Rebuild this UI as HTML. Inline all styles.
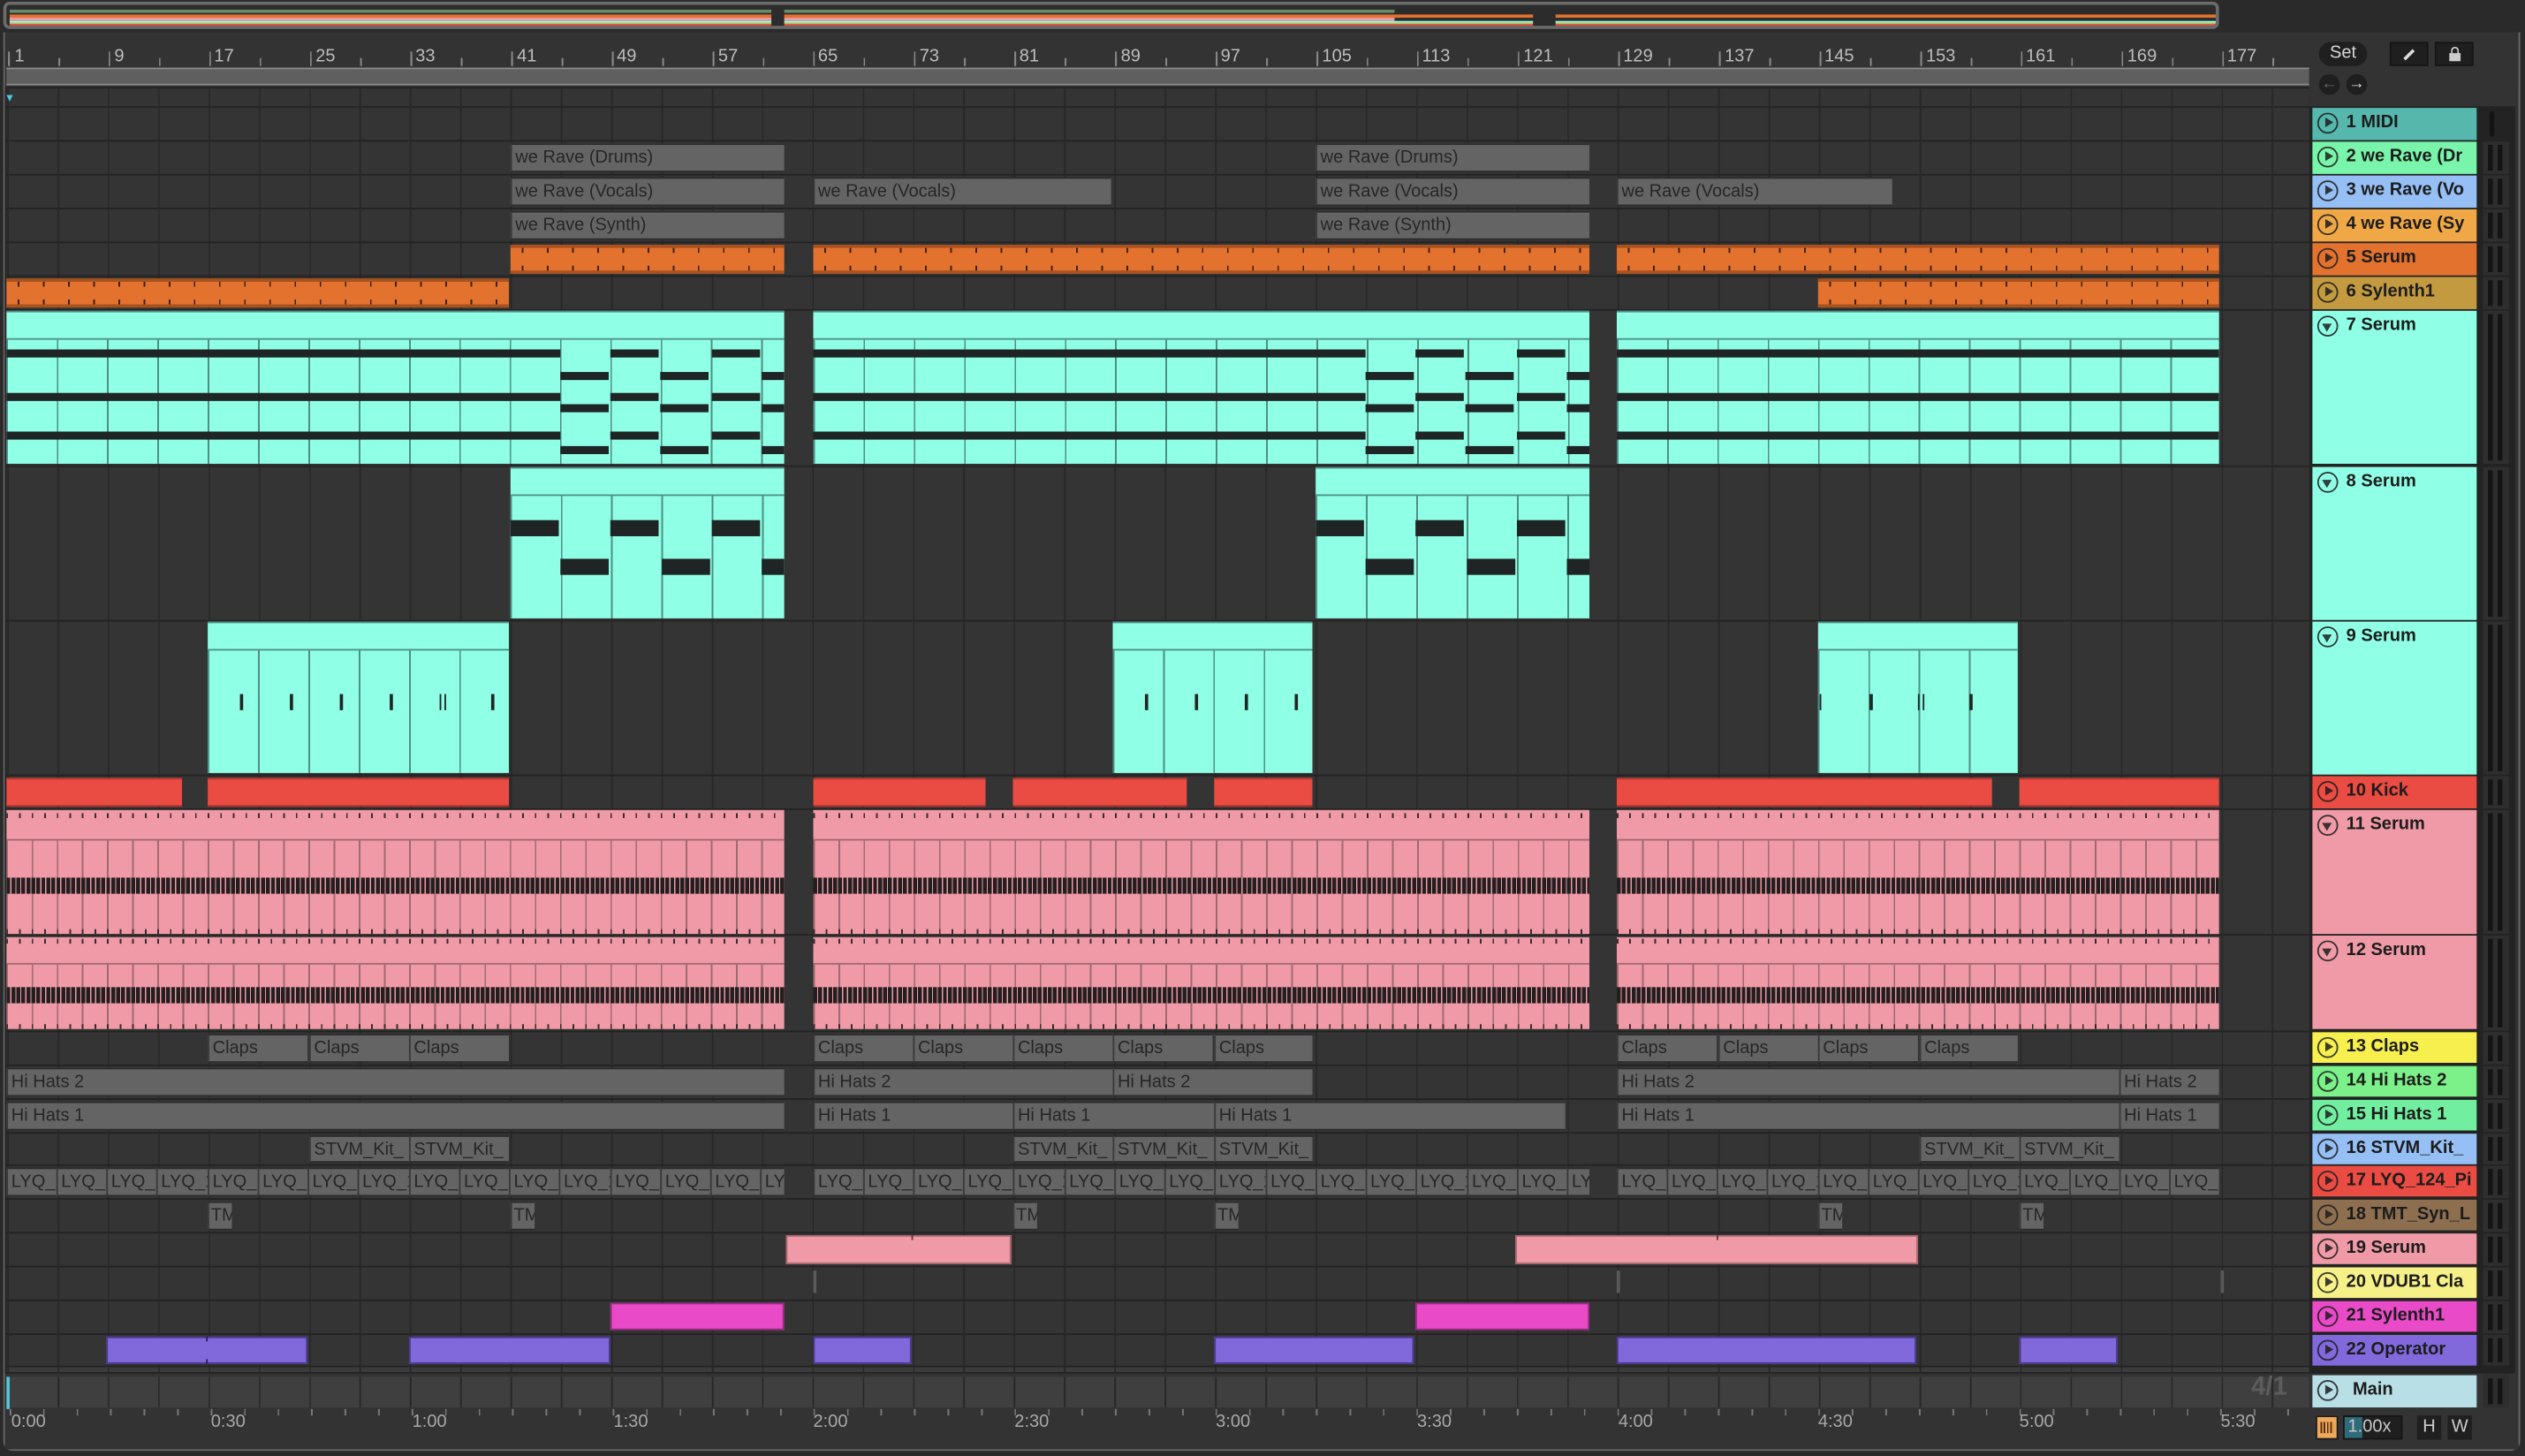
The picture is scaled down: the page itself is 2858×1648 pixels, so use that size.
<!DOCTYPE html>
<html><head><meta charset="utf-8"><style>
*{margin:0;padding:0;box-sizing:border-box}
body{width:2858px;height:1648px;background:#2a2a2a;overflow:hidden;font-family:"Liberation Sans",sans-serif}
#s{position:absolute;left:0;top:0;width:1568px;height:904px;transform:scale(1.8227);transform-origin:0 0;background:#2a2a2a}
.a{position:absolute}
.row{position:absolute;left:4px;width:1430px;background-color:#343434;background-image:repeating-linear-gradient(90deg,#282828 0 1px,transparent 1px 31.25px);background-position:0.5px 0}
.g{position:absolute;background:#646464;color:#262626;font-size:11px;line-height:16px;padding-left:2px;overflow:hidden;white-space:nowrap;border-top:1px solid #2c2c2c;border-bottom:1px solid #2c2c2c;border-left:1px solid #3a3a3a}
.o{position:absolute;background:#e3722f;border-top:2px solid #a8521f;border-bottom:2px solid #a8521f}
.o::before,.o::after{content:"";position:absolute;left:0;right:0;height:3px;background:repeating-linear-gradient(90deg,transparent 0 7px,#3a2010 7px 8px,transparent 8px 15.625px)}
.o::before{top:0}.o::after{bottom:0}
.r{position:absolute;background:#ea4b42;border-top:1px solid #b13a33;border-bottom:1px solid #a9332c}
.c{position:absolute;background:#8fffe6;overflow:hidden;border-top:1px solid #4f8f85}
.c .v{position:absolute;top:17px;bottom:0;left:0;right:0;background:repeating-linear-gradient(90deg,#4f8f85 0 1px,transparent 1px 31.25px)}
.c .h{position:absolute;left:0;right:0;top:16px;height:1px;background:#4f8f85}
.n{position:absolute;height:5px;background:#1f2524}
.p{position:absolute;background:#ef9aa6;overflow:hidden}
.p .v{position:absolute;left:0;right:0;background:repeating-linear-gradient(90deg,#a06a72 0 1px,transparent 1px 15.625px)}
.p .t{position:absolute;left:0;right:0;height:3px;background:repeating-linear-gradient(90deg,#3b2a2c 0 1px,transparent 1px 7.8125px)}
.p .d{position:absolute;left:0;right:0;height:10px;background:repeating-linear-gradient(90deg,#231f20 0 2.4px,#ef9aa6 2.4px 3.1px)}
.hd{position:absolute;left:1436px;width:102px;font-size:11px;font-weight:bold;color:#1c1c1c;line-height:19px;padding-left:21px;white-space:nowrap;overflow:hidden}
.hd::before{content:"";position:absolute;left:3px;top:3px;width:11px;height:11px;border:1.3px solid #1c1c1c;border-radius:50%;opacity:.85}
.hd::after{content:"";position:absolute;left:7.5px;top:6px;border-left:5px solid #1c1c1c;border-top:3px solid transparent;border-bottom:3px solid transparent;opacity:.85}
.hd.dn::after{left:5.5px;top:8px;border-top:5px solid #1c1c1c;border-left:3px solid transparent;border-right:3px solid transparent;border-bottom:0}
.mx{position:absolute;left:1542px;width:16px;background:#2e2e2e}
.mx::before,.mx::after{content:"";position:absolute;top:2px;bottom:2px;width:3px;background:#141414}
.mx::before{left:3px}.mx::after{left:9px}
.rl{position:absolute;top:29px;font-size:11px;color:#bdbdbd}
.tl{position:absolute;top:877px;font-size:11px;color:#a8a8a8}
</style></head><body><div id="s">
<div class="a" style="left:2px;top:20px;width:1563px;height:881px;border:2px solid #6b6b6b;border-top:none;border-radius:0 0 6px 6px"></div>
<div class="a" style="left:3px;top:20px;width:1561px;height:880px;background:#333"></div>
<div class="a" style="left:3px;top:54px;width:1559px;height:799px;background:#232323"></div>
<div class="a" style="left:1434px;top:54px;width:128px;height:12px;background:#333"></div>
<!-- overview -->
<div class="a" style="left:2px;top:1px;width:1376px;height:17px;border:2px solid #6b6b6b;border-radius:4px;background:#2c2c2c;overflow:hidden">
 <div class="a" style="left:2px;top:3px;width:860px;height:2px;background:#6c8a6a"></div>
 <div class="a" style="left:2px;top:6px;width:1370px;height:2px;background:#e3722f"></div>
 <div class="a" style="left:2px;top:8px;width:860px;height:2px;background:#ef9aa6"></div>
 <div class="a" style="left:2px;top:10px;width:1370px;height:1px;background:#8fffe6"></div>
 <div class="a" style="left:2px;top:11px;width:1370px;height:1px;background:#b8c860"></div>
 <div class="a" style="left:2px;top:12px;width:1370px;height:1px;background:#ea4b42"></div>
 <div class="a" style="left:475px;top:2px;width:8px;height:12px;background:#2c2c2c"></div>
 <div class="a" style="left:948px;top:2px;width:14px;height:12px;background:#2c2c2c"></div>
</div>
<!-- ruler -->
<div class="a" style="left:4px;top:42px;width:1430px;height:11px;background:#5f5f5f;border-top:1px solid #8a8a8a;border-bottom:1px solid #8a8a8a"></div>
<div class="a" style="left:4px;top:36px;width:1430px;height:5px;background:repeating-linear-gradient(90deg,#888 0 1px,transparent 1px 31.25px);background-position:1px 0"></div>
<div class="a" style="left:4px;top:32px;width:1430px;height:9px;background:repeating-linear-gradient(90deg,#888 0 1px,transparent 1px 62.5px);background-position:1px 0"></div>
<span class="rl" style="left:9px">1</span><span class="rl" style="left:71px">9</span><span class="rl" style="left:133px">17</span><span class="rl" style="left:196px">25</span><span class="rl" style="left:258px">33</span><span class="rl" style="left:321px">41</span><span class="rl" style="left:383px">49</span><span class="rl" style="left:446px">57</span><span class="rl" style="left:508px">65</span><span class="rl" style="left:571px">73</span><span class="rl" style="left:633px">81</span><span class="rl" style="left:696px">89</span><span class="rl" style="left:758px">97</span><span class="rl" style="left:821px">105</span><span class="rl" style="left:883px">113</span><span class="rl" style="left:946px">121</span><span class="rl" style="left:1008px">129</span><span class="rl" style="left:1071px">137</span><span class="rl" style="left:1133px">145</span><span class="rl" style="left:1196px">153</span><span class="rl" style="left:1258px">161</span><span class="rl" style="left:1321px">169</span><span class="rl" style="left:1383px">177</span>
<!-- rows -->
<div class="row" style="top:55px;height:11px"></div>
<div class="a" style="left:4px;top:59px;border-top:4px solid #4fc6dc;border-left:2px solid transparent;border-right:2px solid transparent"></div>
<div class="row" style="top:67px;height:20px"></div>
<div class="row" style="top:88px;height:20px"></div>
<div class="row" style="top:109px;height:20px"></div>
<div class="row" style="top:130px;height:20px"></div>
<div class="row" style="top:151px;height:20px"></div>
<div class="row" style="top:172px;height:20px"></div>
<div class="row" style="top:193px;height:96px"></div>
<div class="row" style="top:290px;height:95px"></div>
<div class="row" style="top:386px;height:95px"></div>
<div class="row" style="top:482px;height:20px"></div>
<div class="row" style="top:503px;height:77px"></div>
<div class="row" style="top:581px;height:59px"></div>
<div class="row" style="top:641px;height:20px"></div>
<div class="row" style="top:662px;height:20px"></div>
<div class="row" style="top:683px;height:20px"></div>
<div class="row" style="top:704px;height:19px"></div>
<div class="row" style="top:724px;height:20px"></div>
<div class="row" style="top:745px;height:20px"></div>
<div class="row" style="top:766px;height:20px"></div>
<div class="row" style="top:787px;height:20px"></div>
<div class="row" style="top:808px;height:20px"></div>
<div class="row" style="top:829px;height:19px"></div>
<div class="row" style="top:849px;height:3px;background-color:#3b3b3b"></div>
<div class="row" style="top:855px;height:19px;background-color:#3f3f3f"></div>
<div class="a" style="left:4px;top:855px;width:2px;height:20px;background:#4fc6dc"></div>
<!-- time ruler -->
<div class="a" style="left:4px;top:875px;width:1430px;height:4px;background:repeating-linear-gradient(90deg,#777 0 1px,transparent 1px 20.8px);background-position:2px 0"></div>
<span class="tl" style="left:7px">0:00</span><span class="tl" style="left:131px">0:30</span><span class="tl" style="left:256px">1:00</span><span class="tl" style="left:381px">1:30</span><span class="tl" style="left:505px">2:00</span><span class="tl" style="left:630px">2:30</span><span class="tl" style="left:755px">3:00</span><span class="tl" style="left:880px">3:30</span><span class="tl" style="left:1005px">4:00</span><span class="tl" style="left:1129px">4:30</span><span class="tl" style="left:1254px">5:00</span><span class="tl" style="left:1379px">5:30</span>
<div class="a" style="left:1398px;top:853px;font-size:16px;font-weight:bold;color:#5c5c5c">4/1</div>

<div class="g" style="left:317px;top:89px;width:170px;height:18px">we Rave (Drums)</div>
<div class="g" style="left:817px;top:89px;width:170px;height:18px">we Rave (Drums)</div>
<div class="g" style="left:317px;top:110px;width:170px;height:18px">we Rave (Vocals)</div>
<div class="g" style="left:505px;top:110px;width:185px;height:18px">we Rave (Vocals)</div>
<div class="g" style="left:817px;top:110px;width:170px;height:18px">we Rave (Vocals)</div>
<div class="g" style="left:1004px;top:110px;width:171px;height:18px">we Rave (Vocals)</div>
<div class="g" style="left:317px;top:131px;width:170px;height:18px">we Rave (Synth)</div>
<div class="g" style="left:817px;top:131px;width:170px;height:18px">we Rave (Synth)</div>
<div class="o" style="left:317px;top:152px;width:170px;height:18px"></div>
<div class="o" style="left:505px;top:152px;width:482px;height:18px"></div>
<div class="o" style="left:1004px;top:152px;width:374px;height:18px"></div>
<div class="o" style="left:4px;top:173px;width:312px;height:18px"></div>
<div class="o" style="left:1129px;top:173px;width:249px;height:18px"></div>

<div class="c" style="left:4px;top:193px;width:483px;height:95px"><div class="h"></div><div class="v"></div>
 <div class="n" style="left:0;width:344px;top:23px"></div><div class="n" style="left:0;width:344px;top:50px"></div><div class="n" style="left:0;width:344px;top:74px"></div>
 <div class="n" style="left:344px;width:30px;top:37px"></div><div class="n" style="left:344px;width:30px;top:57px"></div><div class="n" style="left:344px;width:30px;top:83px"></div>
 <div class="n" style="left:375px;width:30px;top:23px"></div><div class="n" style="left:375px;width:30px;top:50px"></div><div class="n" style="left:375px;width:30px;top:74px"></div>
 <div class="n" style="left:406px;width:30px;top:37px"></div><div class="n" style="left:406px;width:30px;top:57px"></div><div class="n" style="left:406px;width:30px;top:83px"></div>
 <div class="n" style="left:438px;width:30px;top:23px"></div><div class="n" style="left:438px;width:30px;top:50px"></div><div class="n" style="left:438px;width:30px;top:74px"></div>
 <div class="n" style="left:469px;width:14px;top:37px"></div><div class="n" style="left:469px;width:14px;top:57px"></div><div class="n" style="left:469px;width:14px;top:83px"></div>
</div>
<div class="c" style="left:505px;top:193px;width:482px;height:95px"><div class="h"></div><div class="v"></div>
 <div class="n" style="left:0;width:343px;top:23px"></div><div class="n" style="left:0;width:343px;top:50px"></div><div class="n" style="left:0;width:343px;top:74px"></div>
 <div class="n" style="left:343px;width:30px;top:37px"></div><div class="n" style="left:343px;width:30px;top:57px"></div><div class="n" style="left:343px;width:30px;top:83px"></div>
 <div class="n" style="left:374px;width:30px;top:23px"></div><div class="n" style="left:374px;width:30px;top:50px"></div><div class="n" style="left:374px;width:30px;top:74px"></div>
 <div class="n" style="left:405px;width:30px;top:37px"></div><div class="n" style="left:405px;width:30px;top:57px"></div><div class="n" style="left:405px;width:30px;top:83px"></div>
 <div class="n" style="left:437px;width:30px;top:23px"></div><div class="n" style="left:437px;width:30px;top:50px"></div><div class="n" style="left:437px;width:30px;top:74px"></div>
 <div class="n" style="left:468px;width:14px;top:37px"></div><div class="n" style="left:468px;width:14px;top:57px"></div><div class="n" style="left:468px;width:14px;top:83px"></div>
</div>
<div class="c" style="left:1004px;top:193px;width:374px;height:95px"><div class="h"></div><div class="v"></div>
 <div class="n" style="left:0;right:0;top:23px"></div><div class="n" style="left:0;right:0;top:50px"></div><div class="n" style="left:0;right:0;top:74px"></div>
</div>
<div class="c" style="left:317px;top:290px;width:170px;height:94px"><div class="h"></div><div class="v"></div>
 <div class="n" style="left:0;width:30px;top:32px;height:10px"></div><div class="n" style="left:31px;width:30px;top:56px;height:10px"></div><div class="n" style="left:62px;width:30px;top:32px;height:10px"></div><div class="n" style="left:94px;width:30px;top:56px;height:10px"></div><div class="n" style="left:125px;width:30px;top:32px;height:10px"></div><div class="n" style="left:156px;width:14px;top:56px;height:10px"></div>
</div>
<div class="c" style="left:817px;top:290px;width:170px;height:94px"><div class="h"></div><div class="v"></div>
 <div class="n" style="left:0;width:30px;top:32px;height:10px"></div><div class="n" style="left:31px;width:30px;top:56px;height:10px"></div><div class="n" style="left:62px;width:30px;top:32px;height:10px"></div><div class="n" style="left:94px;width:30px;top:56px;height:10px"></div><div class="n" style="left:125px;width:30px;top:32px;height:10px"></div><div class="n" style="left:156px;width:14px;top:56px;height:10px"></div>
</div>
<div class="c" style="left:129px;top:386px;width:187px;height:94px"><div class="h"></div><div class="v"></div>
 <div class="n" style="left:20px;width:2px;height:10px;top:44px"></div><div class="n" style="left:51px;width:2px;height:10px;top:44px"></div><div class="n" style="left:82px;width:2px;height:10px;top:44px"></div><div class="n" style="left:113px;width:2px;height:10px;top:44px"></div><div class="n" style="left:144px;width:1px;height:10px;top:44px"></div><div class="n" style="left:147px;width:1px;height:10px;top:44px"></div><div class="n" style="left:176px;width:2px;height:10px;top:44px"></div>
</div>
<div class="c" style="left:691px;top:386px;width:124px;height:94px"><div class="h"></div><div class="v"></div>
 <div class="n" style="left:20px;width:2px;height:10px;top:44px"></div><div class="n" style="left:51px;width:2px;height:10px;top:44px"></div><div class="n" style="left:82px;width:2px;height:10px;top:44px"></div><div class="n" style="left:113px;width:2px;height:10px;top:44px"></div>
</div>
<div class="c" style="left:1129px;top:386px;width:124px;height:94px"><div class="h"></div><div class="v"></div>
 <div class="n" style="left:1px;width:1px;height:10px;top:44px"></div><div class="n" style="left:32px;width:2px;height:10px;top:44px"></div><div class="n" style="left:62px;width:1px;height:10px;top:44px"></div><div class="n" style="left:65px;width:1px;height:10px;top:44px"></div><div class="n" style="left:94px;width:2px;height:10px;top:44px"></div>
</div>
<div class="r" style="left:4px;top:483px;width:109px;height:18px"></div>
<div class="r" style="left:129px;top:483px;width:187px;height:18px"></div>
<div class="r" style="left:505px;top:483px;width:107px;height:18px"></div>
<div class="r" style="left:629px;top:483px;width:108px;height:18px"></div>
<div class="r" style="left:754px;top:483px;width:61px;height:18px"></div>
<div class="r" style="left:1004px;top:483px;width:233px;height:18px"></div>
<div class="r" style="left:1254px;top:483px;width:124px;height:18px"></div>

<div class="p" style="left:4px;top:503px;width:483px;height:77px"><div class="t" style="top:2px"></div><div class="a" style="left:0;right:0;top:18px;height:1px;background:#a06a72"></div><div class="v" style="top:19px;bottom:0"></div><div class="d" style="top:42px"></div><div class="t" style="bottom:0"></div></div>
<div class="p" style="left:505px;top:503px;width:482px;height:77px"><div class="t" style="top:2px"></div><div class="a" style="left:0;right:0;top:18px;height:1px;background:#a06a72"></div><div class="v" style="top:19px;bottom:0"></div><div class="d" style="top:42px"></div><div class="t" style="bottom:0"></div></div>
<div class="p" style="left:1004px;top:503px;width:374px;height:77px"><div class="t" style="top:2px"></div><div class="a" style="left:0;right:0;top:18px;height:1px;background:#a06a72"></div><div class="v" style="top:19px;bottom:0"></div><div class="d" style="top:42px"></div><div class="t" style="bottom:0"></div></div>
<div class="p" style="left:4px;top:582px;width:483px;height:57px"><div class="t" style="top:1px"></div><div class="a" style="left:0;right:0;top:16px;height:1px;background:#a06a72"></div><div class="v" style="top:17px;bottom:0"></div><div class="d" style="top:31px"></div><div class="t" style="bottom:0"></div></div>
<div class="p" style="left:505px;top:582px;width:482px;height:57px"><div class="t" style="top:1px"></div><div class="a" style="left:0;right:0;top:16px;height:1px;background:#a06a72"></div><div class="v" style="top:17px;bottom:0"></div><div class="d" style="top:31px"></div><div class="t" style="bottom:0"></div></div>
<div class="p" style="left:1004px;top:582px;width:374px;height:57px"><div class="t" style="top:1px"></div><div class="a" style="left:0;right:0;top:16px;height:1px;background:#a06a72"></div><div class="v" style="top:17px;bottom:0"></div><div class="d" style="top:31px"></div><div class="t" style="bottom:0"></div></div>

<div class="g" style="left:129px;top:642px;width:62px;height:18px">Claps</div><div class="g" style="left:192px;top:642px;width:62px;height:18px">Claps</div><div class="g" style="left:254px;top:642px;width:62px;height:18px">Claps</div>
<div class="g" style="left:505px;top:642px;width:62px;height:18px">Claps</div><div class="g" style="left:567px;top:642px;width:62px;height:18px">Claps</div><div class="g" style="left:629px;top:642px;width:62px;height:18px">Claps</div><div class="g" style="left:691px;top:642px;width:62px;height:18px">Claps</div><div class="g" style="left:754px;top:642px;width:61px;height:18px">Claps</div>
<div class="g" style="left:1004px;top:642px;width:62px;height:18px">Claps</div><div class="g" style="left:1067px;top:642px;width:62px;height:18px">Claps</div><div class="g" style="left:1129px;top:642px;width:62px;height:18px">Claps</div><div class="g" style="left:1192px;top:642px;width:61px;height:18px">Claps</div>
<div class="g" style="left:4px;top:663px;width:483px;height:18px">Hi Hats 2</div><div class="g" style="left:505px;top:663px;width:186px;height:18px">Hi Hats 2</div><div class="g" style="left:691px;top:663px;width:124px;height:18px">Hi Hats 2</div><div class="g" style="left:1004px;top:663px;width:312px;height:18px">Hi Hats 2</div><div class="g" style="left:1316px;top:663px;width:62px;height:18px">Hi Hats 2</div>
<div class="g" style="left:4px;top:684px;width:483px;height:18px">Hi Hats 1</div><div class="g" style="left:505px;top:684px;width:124px;height:18px">Hi Hats 1</div><div class="g" style="left:629px;top:684px;width:125px;height:18px">Hi Hats 1</div><div class="g" style="left:754px;top:684px;width:218px;height:18px">Hi Hats 1</div><div class="g" style="left:1004px;top:684px;width:312px;height:18px">Hi Hats 1</div><div class="g" style="left:1316px;top:684px;width:62px;height:18px">Hi Hats 1</div>
<div class="g" style="left:192px;top:705px;width:62px;height:17px">STVM_Kit_</div><div class="g" style="left:254px;top:705px;width:62px;height:17px">STVM_Kit_</div><div class="g" style="left:629px;top:705px;width:62px;height:17px">STVM_Kit_</div><div class="g" style="left:691px;top:705px;width:63px;height:17px">STVM_Kit_</div><div class="g" style="left:754px;top:705px;width:61px;height:17px">STVM_Kit_</div><div class="g" style="left:1192px;top:705px;width:62px;height:17px">STVM_Kit_</div><div class="g" style="left:1254px;top:705px;width:62px;height:17px">STVM_Kit_</div>
<div class="g" style="left:4px;top:725px;width:31px;height:18px">LYQ_1</div><div class="g" style="left:35px;top:725px;width:31px;height:18px">LYQ_1</div><div class="g" style="left:66px;top:725px;width:31px;height:18px">LYQ_1</div><div class="g" style="left:97px;top:725px;width:32px;height:18px">LYQ_1</div><div class="g" style="left:129px;top:725px;width:31px;height:18px">LYQ_1</div><div class="g" style="left:160px;top:725px;width:31px;height:18px">LYQ_1</div><div class="g" style="left:191px;top:725px;width:31px;height:18px">LYQ_1</div><div class="g" style="left:222px;top:725px;width:32px;height:18px">LYQ_1</div><div class="g" style="left:254px;top:725px;width:31px;height:18px">LYQ_1</div><div class="g" style="left:285px;top:725px;width:31px;height:18px">LYQ_1</div><div class="g" style="left:316px;top:725px;width:31px;height:18px">LYQ_1</div><div class="g" style="left:347px;top:725px;width:32px;height:18px">LYQ_1</div><div class="g" style="left:379px;top:725px;width:31px;height:18px">LYQ_1</div><div class="g" style="left:410px;top:725px;width:31px;height:18px">LYQ_1</div><div class="g" style="left:441px;top:725px;width:31px;height:18px">LYQ_1</div><div class="g" style="left:472px;top:725px;width:15px;height:18px">LYQ_1</div>
<div class="g" style="left:505px;top:725px;width:31px;height:18px">LYQ_1</div><div class="g" style="left:536px;top:725px;width:31px;height:18px">LYQ_1</div><div class="g" style="left:567px;top:725px;width:31px;height:18px">LYQ_1</div><div class="g" style="left:598px;top:725px;width:31px;height:18px">LYQ_1</div><div class="g" style="left:629px;top:725px;width:32px;height:18px">LYQ_1</div><div class="g" style="left:661px;top:725px;width:31px;height:18px">LYQ_1</div><div class="g" style="left:692px;top:725px;width:31px;height:18px">LYQ_1</div><div class="g" style="left:723px;top:725px;width:31px;height:18px">LYQ_1</div><div class="g" style="left:754px;top:725px;width:32px;height:18px">LYQ_1</div><div class="g" style="left:786px;top:725px;width:31px;height:18px">LYQ_1</div><div class="g" style="left:817px;top:725px;width:31px;height:18px">LYQ_1</div><div class="g" style="left:848px;top:725px;width:31px;height:18px">LYQ_1</div><div class="g" style="left:879px;top:725px;width:32px;height:18px">LYQ_1</div><div class="g" style="left:911px;top:725px;width:31px;height:18px">LYQ_1</div><div class="g" style="left:942px;top:725px;width:31px;height:18px">LYQ_1</div><div class="g" style="left:973px;top:725px;width:14px;height:18px">LYQ_1</div>
<div class="g" style="left:1004px;top:725px;width:31px;height:18px">LYQ_1</div><div class="g" style="left:1035px;top:725px;width:31px;height:18px">LYQ_1</div><div class="g" style="left:1066px;top:725px;width:31px;height:18px">LYQ_1</div><div class="g" style="left:1097px;top:725px;width:32px;height:18px">LYQ_1</div><div class="g" style="left:1129px;top:725px;width:31px;height:18px">LYQ_1</div><div class="g" style="left:1160px;top:725px;width:31px;height:18px">LYQ_1</div><div class="g" style="left:1191px;top:725px;width:31px;height:18px">LYQ_1</div><div class="g" style="left:1222px;top:725px;width:32px;height:18px">LYQ_1</div><div class="g" style="left:1254px;top:725px;width:31px;height:18px">LYQ_1</div><div class="g" style="left:1285px;top:725px;width:31px;height:18px">LYQ_1</div><div class="g" style="left:1316px;top:725px;width:31px;height:18px">LYQ_1</div><div class="g" style="left:1347px;top:725px;width:31px;height:18px">LYQ_1</div>
<div class="g" style="left:129px;top:746px;width:15px;height:18px;padding-left:1px">TMT</div><div class="g" style="left:317px;top:746px;width:15px;height:18px;padding-left:1px">TMT</div><div class="g" style="left:629px;top:746px;width:15px;height:18px;padding-left:1px">TMT</div><div class="g" style="left:754px;top:746px;width:15px;height:18px;padding-left:1px">TMT</div><div class="g" style="left:1129px;top:746px;width:15px;height:18px;padding-left:1px">TMT</div><div class="g" style="left:1254px;top:746px;width:15px;height:18px;padding-left:1px">TMT</div>
<div class="a" style="left:488px;top:767px;width:140px;height:18px;background:#ef9aa6;border:1px solid #a86a72"></div>
<div class="a" style="left:566px;top:767px;width:1px;height:3px;background:#5a3a3e"></div>
<div class="a" style="left:941px;top:767px;width:250px;height:18px;background:#ef9aa6;border:1px solid #a86a72"></div>
<div class="a" style="left:1066px;top:767px;width:1px;height:3px;background:#5a3a3e"></div>
<div class="a" style="left:505px;top:789px;width:2px;height:14px;background:#5a5a5a"></div>
<div class="a" style="left:1004px;top:789px;width:2px;height:14px;background:#5a5a5a"></div>
<div class="a" style="left:1379px;top:789px;width:2px;height:14px;background:#5a5a5a"></div>
<div class="a" style="left:379px;top:809px;width:108px;height:17px;background:#e94ac8;border:1px solid #9a2c85"></div>
<div class="a" style="left:879px;top:809px;width:108px;height:17px;background:#e94ac8;border:1px solid #9a2c85"></div>
<div class="a" style="left:66px;top:830px;width:125px;height:17px;background:#8169dc;border:1px solid #4a3a8c"></div>
<div class="a" style="left:254px;top:830px;width:125px;height:17px;background:#8169dc;border:1px solid #4a3a8c"></div>
<div class="a" style="left:505px;top:830px;width:61px;height:17px;background:#8169dc;border:1px solid #4a3a8c"></div>
<div class="a" style="left:754px;top:830px;width:124px;height:17px;background:#8169dc;border:1px solid #4a3a8c"></div>
<div class="a" style="left:1004px;top:830px;width:186px;height:17px;background:#8169dc;border:1px solid #4a3a8c"></div>
<div class="a" style="left:1254px;top:830px;width:61px;height:17px;background:#8169dc;border:1px solid #4a3a8c"></div>
<div class="a" style="left:128px;top:830px;width:1px;height:3px;background:#2a1f50"></div><div class="a" style="left:128px;top:844px;width:1px;height:3px;background:#2a1f50"></div>

<!-- right panel -->
<div class="a" style="left:1434px;top:20px;width:129px;height:34px;background:#333"></div>
<div class="a" style="left:1440px;top:26px;width:30px;height:15px;border-radius:8px;background:#1f1f1f;color:#d6d6d6;font-size:11px;text-align:center;line-height:15px">Set</div>
<div class="a" style="left:1484px;top:26px;width:24px;height:15px;background:#1f1f1f;border:1px solid #161616"></div>
<div class="a" style="left:1492px;top:33px;width:8px;height:2px;background:#ddd;transform:rotate(-45deg)"></div>
<div class="a" style="left:1512px;top:26px;width:24px;height:15px;background:#1f1f1f;border:1px solid #161616"></div>
<div class="a" style="left:1521px;top:33px;width:7px;height:5px;background:#ccc"></div>
<div class="a" style="left:1522px;top:29px;width:5px;height:6px;border:1.3px solid #ccc;border-bottom:none;border-radius:3px 3px 0 0"></div>
<div class="a" style="left:1440px;top:46px;width:13px;height:13px;border-radius:50%;background:#1f1f1f;color:#666;font-size:10px;text-align:center;line-height:13px">&#8592;</div>
<div class="a" style="left:1457px;top:46px;width:13px;height:13px;border-radius:50%;background:#1f1f1f;color:#ddd;font-size:10px;text-align:center;line-height:13px">&#8594;</div>

<div class="hd" style="top:67px;height:20px;background:#56b8ad">1 MIDI</div>
<div class="hd" style="top:88px;height:20px;background:#78f5aa">2 we Rave (Dr</div>
<div class="hd" style="top:109px;height:20px;background:#95bff5">3 we Rave (Vo</div>
<div class="hd" style="top:130px;height:20px;background:#f0a847">4 we Rave (Sy</div>
<div class="hd" style="top:151px;height:20px;background:#e3722f">5 Serum</div>
<div class="hd" style="top:172px;height:20px;background:#c39a40">6 Sylenth1</div>
<div class="hd dn" style="top:193px;height:95px;background:#8fffe6">7 Serum</div>
<div class="hd dn" style="top:290px;height:95px;background:#8fffe6">8 Serum</div>
<div class="hd dn" style="top:386px;height:95px;background:#8fffe6">9 Serum</div>
<div class="hd" style="top:482px;height:20px;background:#ea4b42">10 Kick</div>
<div class="hd dn" style="top:503px;height:77px;background:#ef9aa6">11 Serum</div>
<div class="hd dn" style="top:581px;height:58px;background:#ef9aa6">12 Serum</div>
<div class="hd" style="top:641px;height:19px;background:#f6ef4e">13 Claps</div>
<div class="hd" style="top:662px;height:19px;background:#7cf089">14 Hi Hats 2</div>
<div class="hd" style="top:683px;height:19px;background:#72eea0">15 Hi Hats 1</div>
<div class="hd" style="top:704px;height:19px;background:#95bff5">16 STVM_Kit_</div>
<div class="hd" style="top:724px;height:19px;background:#ea4b42">17 LYQ_124_Pi</div>
<div class="hd" style="top:745px;height:19px;background:#8d6f4f">18 TMT_Syn_L</div>
<div class="hd" style="top:766px;height:19px;background:#ef9aa6">19 Serum</div>
<div class="hd" style="top:787px;height:19px;background:#f6f088">20 VDUB1 Cla</div>
<div class="hd" style="top:808px;height:19px;background:#e94ac8">21 Sylenth1</div>
<div class="hd" style="top:829px;height:19px;background:#8169dc">22 Operator</div>
<div class="a" style="left:1434px;top:853px;width:128px;height:47px;background:#333"></div>
<div class="hd" style="top:854px;height:20px;background:#b8dee6;padding-left:25px">Main</div>

<div class="a" style="left:1546px;top:69px;width:3px;height:16px;background:#141414;border-radius:2px"></div>
<div class="mx" style="top:88px;height:20px"></div><div class="mx" style="top:109px;height:20px"></div><div class="mx" style="top:130px;height:20px"></div><div class="mx" style="top:151px;height:20px"></div><div class="mx" style="top:172px;height:20px"></div>
<div class="mx" style="top:193px;height:95px"></div><div class="mx" style="top:290px;height:95px"></div><div class="mx" style="top:386px;height:95px"></div>
<div class="mx" style="top:482px;height:20px"></div><div class="mx" style="top:503px;height:77px"></div><div class="mx" style="top:581px;height:59px"></div>
<div class="mx" style="top:641px;height:20px"></div><div class="mx" style="top:662px;height:20px"></div><div class="mx" style="top:683px;height:20px"></div><div class="mx" style="top:704px;height:19px"></div><div class="mx" style="top:724px;height:20px"></div><div class="mx" style="top:745px;height:20px"></div><div class="mx" style="top:766px;height:20px"></div><div class="mx" style="top:787px;height:20px"></div><div class="mx" style="top:808px;height:20px"></div><div class="mx" style="top:829px;height:19px"></div><div class="mx" style="top:854px;height:20px"></div>

<div class="a" style="left:1438px;top:879px;width:14px;height:15px;background:#f0a85a;border:1px solid #1a1a1a"></div>
<div class="a" style="left:1441px;top:883px;width:8px;height:7px;background:repeating-linear-gradient(90deg,#5a3010 0 1px,transparent 1px 2px)"></div>
<div class="a" style="left:1455px;top:879px;width:37px;height:15px;background:#1f1f1f;border:1px solid #161616"></div>
<div class="a" style="left:1456px;top:880px;width:11px;height:13px;background:#2d6a7a"></div>
<div class="a" style="left:1458px;top:879px;font-size:11px;color:#c8c8c8;line-height:15px">1.00x</div>
<div class="a" style="left:1501px;top:879px;width:15px;height:15px;background:#1f1f1f;color:#ccc;font-size:11px;text-align:center;line-height:15px">H</div>
<div class="a" style="left:1520px;top:879px;width:15px;height:15px;background:#1f1f1f;color:#ccc;font-size:11px;text-align:center;line-height:15px">W</div>
</div></body></html>
